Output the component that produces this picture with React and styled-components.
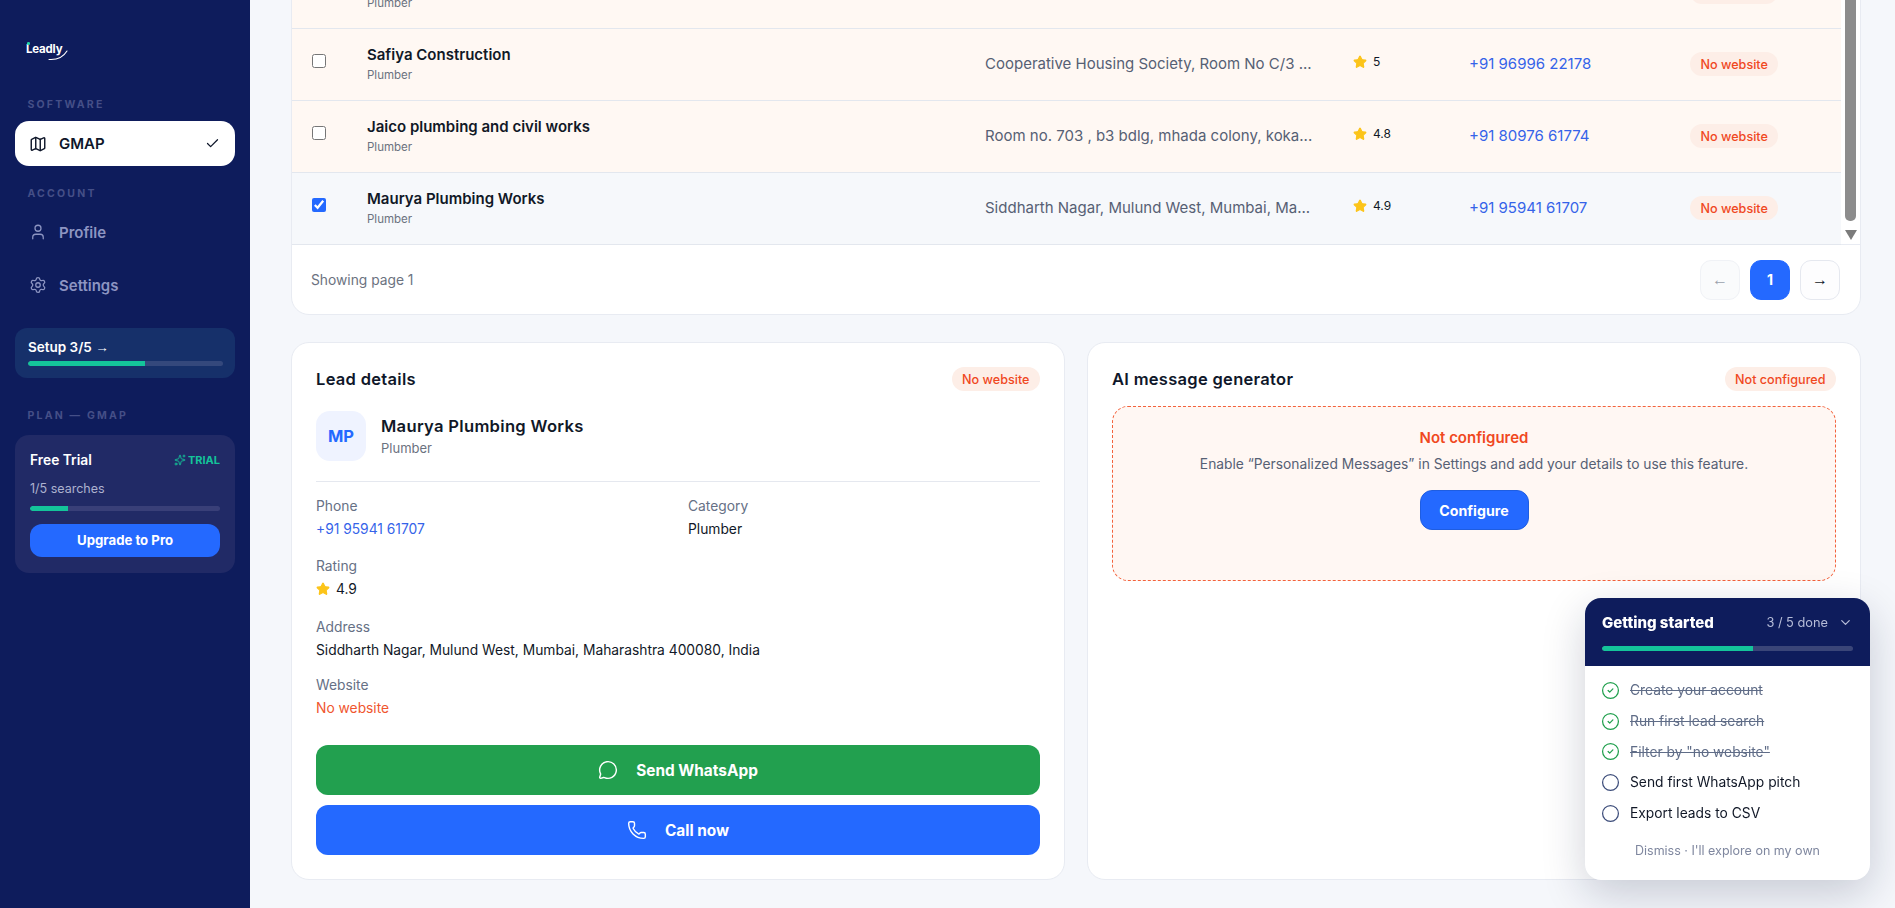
import React from "react";
import styled, { createGlobalStyle } from "styled-components";
import { Map as MapIcon, User, Settings, Check, Star, Sparkles, MessageCircle, Phone, ChevronDown, CircleCheck, Circle } from "lucide-react";

const Global = createGlobalStyle`
  html, body { margin: 0; padding: 0; height: 100%; overflow: hidden; background: #f5f7fb; }
  body { font-family: Inter, "Liberation Sans", sans-serif; color: #111827; }
  * { box-sizing: border-box; }
`;

const Shell = styled.div`
  display: flex;
  width: 100%;
  height: 100vh;
  overflow: hidden;
`;

const Sidebar = styled.aside`
  flex: 0 0 250px;
  height: 100%;
  background: #0e1c5c;
  display: flex;
  flex-direction: column;
  padding: 40px 15px 0;
`;

const LogoWrap = styled.div`
  position: relative;
  height: 18px;
  margin-left: 11px;
  display: flex;
  align-items: center;
`;

const LogoText = styled.span`
  font-size: 11.5px;
  font-weight: 700;
  color: #fff;
  letter-spacing: -0.2px;
  line-height: 14px;
`;

const LogoDot = styled.span`
  position: absolute;
  left: 1px;
  top: 2px;
  width: 2.5px;
  height: 2.5px;
  border-radius: 50%;
  background: #1fd3a5;
`;

const LogoSwoosh = styled.svg`
  position: absolute;
  left: 22px;
  top: 9px;
`;

const SectionLabel = styled.div`
  margin-top: ${(p) => p.$top}px;
  padding-left: 12.5px;
  font-size: 10.5px;
  line-height: 12px;
  font-weight: 700;
  letter-spacing: 2.2px;
  color: #454f87;
  white-space: nowrap;
`;

const NavItem = styled.div`
  height: 45px;
  margin-top: ${(p) => p.$top}px;
  padding: 0 15px 0 14px;
  display: flex;
  align-items: center;
  gap: 12px;
  border-radius: 14px;
  background: ${(p) => (p.$active ? "#fff" : "transparent")};
  color: ${(p) => (p.$active ? "#0f172a" : "#8d95c2")};
  font-size: 15px;
  font-weight: 600;
`;

const NavLabel = styled.span`
  flex: 1;
`;

const SetupCard = styled.div`
  height: 50px;
  margin-top: 20px;
  padding: 11px 12px 0 13px;
  border-radius: 12px;
  background: #16306a;
`;

const SetupText = styled.div`
  font-size: 13.5px;
  line-height: 16px;
  font-weight: 600;
  color: #fff;
`;

const Arrow = styled.span`
  font-family: "Liberation Sans", Arial, sans-serif;
  font-weight: 400;
`;

const Bar = styled.div`
  height: 5px;
  border-radius: 3px;
  overflow: hidden;
  background: ${(p) => p.$track};
  margin-top: ${(p) => p.$top}px;
`;

const BarFill = styled.div`
  height: 100%;
  background: #14c49a;
  border-radius: 3px 0 0 3px;
`;

const PlanCard = styled.div`
  height: 138px;
  margin-top: 13px;
  padding: 16px 15px 0;
  border-radius: 14px;
  background: #212a66;
`;

const PlanHead = styled.div`
  display: flex;
  justify-content: space-between;
  align-items: center;
  height: 18px;
`;

const PlanName = styled.span`
  font-size: 13.8px;
  font-weight: 600;
  color: #fff;
`;

const TrialTag = styled.span`
  display: inline-flex;
  align-items: center;
  gap: 2px;
  font-size: 11px;
  font-weight: 700;
  color: #14c49a;
`;

const PlanUsage = styled.div`
  margin-top: 13px;
  font-size: 12.5px;
  line-height: 14px;
  color: #adb2cf;
`;

const UpgradeButton = styled.button`
  width: 100%;
  height: 33px;
  margin-top: 13px;
  border: 0;
  border-radius: 12px;
  background: #2469ff;
  color: #fff;
  font-family: Inter, sans-serif;
  font-size: 13.2px;
  font-weight: 700;
`;

const Main = styled.main`
  flex: 1;
  min-width: 0;
  height: 100%;
  overflow: hidden;
  display: flex;
  flex-direction: column;
  justify-content: flex-end;
  padding: 0 34px 28px 41px;
  gap: 27px;
`;

const Card = styled.section`
  flex: none;
  background: #fff;
  border: 1px solid #e8ebf2;
  border-radius: 18px;
  overflow: hidden;
`;

const TableArea = styled.div`
  display: flex;
`;

const Rows = styled.div`
  flex: 1;
  min-width: 0;
`;

const Row = styled.div`
  height: 72px;
  padding-left: 20px;
  display: grid;
  grid-template-columns: 55px 618px 368px 116px 221px 1fr;
  align-items: center;
  background: ${(p) => (p.$selected ? "#f6f8fb" : "#fff8f3")};
  border-bottom: 1px solid #e3e7ee;
`;

const CheckCell = styled.div`
  display: flex;
  padding-bottom: 8px;
`;

const RowCheck = styled.input.attrs({ type: "checkbox", readOnly: true })`
  width: 14px;
  height: 14px;
  margin: 0;
  accent-color: #2469ff;
`;

const LeadBlock = styled.div`
  padding-bottom: 2px;
`;

const LeadName = styled.div`
  font-size: 15px;
  line-height: 18px;
  font-weight: 600;
  color: #111827;
`;

const LeadCategory = styled.div`
  margin-top: 4px;
  font-size: 11.5px;
  line-height: 14px;
  color: #6b7280;
`;

const AddressCell = styled.div`
  padding-bottom: 2px;
  font-size: 15px;
  line-height: 18px;
  color: #566074;
  white-space: nowrap;
`;

const RatingCell = styled.div`
  display: flex;
  align-items: center;
  gap: 6px;
  padding-bottom: 6px;
  font-size: 12px;
  color: #111827;
`;

const PhoneCell = styled.div`
  padding-bottom: 2px;
  line-height: 18px;
`;

const PhoneLink = styled.span`
  font-size: ${(p) => p.$size}px;
  color: #3563e9;
`;

const Badge = styled.span`
  display: inline-flex;
  align-items: center;
  height: 24px;
  padding: 0 10.5px;
  border-radius: 12px;
  background: #fdeee7;
  color: #f0481e;
  font-size: 12.6px;
  font-weight: 500;
  white-space: nowrap;
`;

const BadgeCell = styled.div`
  justify-self: start;
  display: flex;
  padding-bottom: 1px;
`;

const ScrollRail = styled.div`
  flex: 0 0 19px;
  display: flex;
  flex-direction: column;
  align-items: flex-start;
  padding: 0 0 5px 4px;
`;

const ScrollThumb = styled.div`
  flex: 1;
  width: 11px;
  background: #8c8c8c;
  border-radius: 0 0 5px 5px;
`;

const ScrollArrow = styled.div`
  margin-top: 9px;
  width: 0;
  height: 0;
  border-left: 6px solid transparent;
  border-right: 6px solid transparent;
  border-top: 10px solid #7b7b7b;
`;

const TableFooter = styled.div`
  height: 70px;
  padding: 0 20px 0 19px;
  display: flex;
  align-items: center;
  justify-content: space-between;
  border-top: 1px solid #e8ebf2;
  margin-top: -1px;
`;

const PageInfo = styled.span`
  font-size: 13.8px;
  color: #6b7280;
`;

const Pager = styled.div`
  display: flex;
  gap: 10px;
`;

const PageButton = styled.button`
  width: 40px;
  height: 40px;
  border-radius: 11px;
  border: 1px solid ${(p) => (p.$current ? "#2469ff" : p.$disabled ? "#f0f2f6" : "#e5e8ef")};
  background: ${(p) => (p.$current ? "#2469ff" : p.$disabled ? "#fafbfc" : "#fdfdfe")};
  color: ${(p) => (p.$current ? "#fff" : p.$disabled ? "#9aa1ad" : "#111827")};
  font-family: ${(p) => (p.$current ? "Inter, sans-serif" : '"Liberation Sans", Arial, sans-serif')};
  font-size: ${(p) => (p.$current ? 14 : 16)}px;
  font-weight: ${(p) => (p.$current ? 700 : 400)};
`;

const Lower = styled.div`
  flex: none;
  display: grid;
  grid-template-columns: 1fr 1fr;
  gap: 22px;
`;

const Panel = styled(Card)`
  height: 538px;
  padding: 24px;
`;

const PanelHead = styled.div`
  display: flex;
  justify-content: space-between;
  align-items: center;
  height: 24px;
`;

const PanelTitle = styled.h2`
  margin: 0;
  font-size: 16.5px;
  font-weight: 600;
  letter-spacing: 0.3px;
  color: #0f172a;
`;

const Identity = styled.div`
  display: flex;
  align-items: center;
  gap: 15px;
  margin-top: 20px;
  padding-bottom: 20px;
  border-bottom: 1px solid #e5e8ef;
`;

const Avatar = styled.div`
  width: 50px;
  height: 50px;
  display: flex;
  align-items: center;
  justify-content: center;
  border-radius: 14px;
  background: #eff3ff;
  color: #2469ff;
  font-size: 16.5px;
  font-weight: 700;
`;

const IdentityName = styled.div`
  font-size: 16.6px;
  line-height: 20px;
  font-weight: 600;
  letter-spacing: 0.3px;
  color: #111827;
`;

const IdentityCategory = styled.div`
  margin-top: 4px;
  font-size: 13px;
  line-height: 16px;
  color: #6b7280;
`;

const Fields = styled.div`
  display: grid;
  grid-template-columns: 352px 352px;
  column-gap: 20px;
  margin-top: 15px;
`;

const Field = styled.div`
  height: ${(p) => p.$h}px;
  grid-column: ${(p) => (p.$wide ? "1 / -1" : "auto")};
`;

const FieldLabel = styled.div`
  font-size: 13.8px;
  line-height: 18px;
  color: #667085;
`;

const FieldValue = styled.div`
  display: flex;
  align-items: center;
  gap: 6px;
  margin-top: 5px;
  font-size: 13.8px;
  line-height: 18px;
  color: ${(p) => p.$color || "#111827"};
`;

const ActionButton = styled.button`
  width: 100%;
  height: 50px;
  margin-top: ${(p) => p.$top}px;
  display: flex;
  align-items: center;
  justify-content: center;
  gap: 18px;
  border: 0;
  border-radius: 12px;
  background: ${(p) => p.$bg};
  color: #fff;
  font-family: Inter, sans-serif;
  font-size: 15.4px;
  font-weight: 700;
`;

const Notice = styled.div`
  height: 175px;
  margin-top: 15px;
  padding-top: 21px;
  display: flex;
  flex-direction: column;
  align-items: center;
  border: 1px dashed #f3623c;
  border-radius: 16px;
  background: #fff7f3;
`;

const NoticeTitle = styled.div`
  font-size: 15px;
  line-height: 20px;
  font-weight: 600;
  color: #f0481e;
`;

const NoticeText = styled.div`
  margin-top: 7px;
  font-size: 13.8px;
  line-height: 18px;
  color: #566074;
`;

const ConfigureButton = styled.button`
  width: 109px;
  height: 40px;
  margin-top: 17px;
  border: 1px solid #1f5de0;
  border-radius: 12px;
  background: #2469ff;
  color: #fff;
  font-family: Inter, sans-serif;
  font-size: 14.2px;
  font-weight: 700;
`;

const Widget = styled.aside`
  position: fixed;
  left: 1585px;
  top: 598px;
  width: 285px;
  height: 282px;
  border-radius: 16px;
  overflow: hidden;
  background: #fff;
  box-shadow: 0 14px 44px rgba(15, 23, 60, 0.2);
`;

const WidgetHead = styled.div`
  height: 68px;
  padding: 0 17px;
  background: #0e1c5c;
`;

const WidgetTop = styled.div`
  height: 48px;
  display: flex;
  align-items: center;
  justify-content: space-between;
`;

const WidgetTitle = styled.span`
  font-size: 15px;
  font-weight: 800;
  color: #fff;
`;

const WidgetMeta = styled.span`
  display: inline-flex;
  align-items: center;
  gap: 10px;
  font-size: 12.8px;
  color: #b6bcd8;
`;

const StepList = styled.ul`
  list-style: none;
  margin: 0;
  padding: 9px 0 0 15.5px;
`;

const Step = styled.li`
  height: 30.7px;
  display: flex;
  align-items: center;
  gap: 10.5px;
  font-size: 13.8px;
  color: ${(p) => (p.$done ? "#5f6c87" : "#111827")};
  text-decoration: ${(p) => (p.$done ? "line-through" : "none")};
`;

const Dismiss = styled.div`
  margin-top: 15px;
  text-align: center;
  font-size: 12.5px;
  line-height: 16px;
  color: #7f879f;
`;

const leads = [
  { name: "Shree Plumbing Services", address: "Near Station Road", rating: "4.7", phone: "+91 98200 11223" },
  { name: "Safiya Construction", address: "Cooperative Housing Society, Room No C/3 ...", rating: "5", phone: "+91 96996 22178" },
  { name: "Jaico plumbing and civil works", address: "Room no. 703 , b3 bdlg, mhada colony, koka...", rating: "4.8", phone: "+91 80976 61774" },
  { name: "Maurya Plumbing Works", address: "Siddharth Nagar, Mulund West, Mumbai, Ma...", rating: "4.9", phone: "+91 95941 61707", selected: true },
];

const steps = [
  { label: "Create your account", done: true },
  { label: "Run first lead search", done: true },
  { label: 'Filter by "no website"', done: true },
  { label: "Send first WhatsApp pitch" },
  { label: "Export leads to CSV" },
];

const Rating = ({ size = 14 }) => <Star size={size} color="#fcc419" fill="#fcc419" strokeWidth={2} strokeLinejoin="round" />;

export default function App() {
  return (
    <Shell>
      <Global />
      <Sidebar>
        <LogoWrap>
          <LogoDot />
          <LogoText>Leadly</LogoText>
          <LogoSwoosh width="24" height="12" viewBox="0 0 24 12" fill="none">
            <path d="M1 10.5C8 11 15 8.5 19 2" stroke="#fff" strokeWidth="1.1" strokeLinecap="round" />
          </LogoSwoosh>
        </LogoWrap>
        <SectionLabel $top={41}>SOFTWARE</SectionLabel>
        <NavItem $active $top={10}>
          <MapIcon size={18} strokeWidth={1.9} />
          <NavLabel>GMAP</NavLabel>
          <Check size={15} strokeWidth={2} />
        </NavItem>
        <SectionLabel $top={22}>ACCOUNT</SectionLabel>
        <NavItem $top={9.5}>
          <User size={18} strokeWidth={1.7} />
          <NavLabel>Profile</NavLabel>
        </NavItem>
        <NavItem $top={8}>
          <Settings size={18} strokeWidth={1.7} />
          <NavLabel>Settings</NavLabel>
        </NavItem>
        <SetupCard>
          <SetupText>
            Setup 3/5 <Arrow>→</Arrow>
          </SetupText>
          <Bar $track="#34487c" $top={5}>
            <BarFill style={{ width: "60%" }} />
          </Bar>
        </SetupCard>
        <SectionLabel $top={32}>PLAN — GMAP</SectionLabel>
        <PlanCard>
          <PlanHead>
            <PlanName>Free Trial</PlanName>
            <TrialTag>
              <Sparkles size={12} strokeWidth={1.8} />
              TRIAL
            </TrialTag>
          </PlanHead>
          <PlanUsage>1/5 searches</PlanUsage>
          <Bar $track="#393f78" $top={10}>
            <BarFill style={{ width: "20%" }} />
          </Bar>
          <UpgradeButton>Upgrade to Pro</UpgradeButton>
        </PlanCard>
      </Sidebar>

      <Main>
        <Card>
          <TableArea>
            <Rows>
              {leads.map((lead) => (
                <Row key={lead.name} $selected={lead.selected}>
                  <CheckCell>
                    <RowCheck checked={!!lead.selected} />
                  </CheckCell>
                  <LeadBlock>
                    <LeadName>{lead.name}</LeadName>
                    <LeadCategory>Plumber</LeadCategory>
                  </LeadBlock>
                  <AddressCell>{lead.address}</AddressCell>
                  <RatingCell>
                    <Rating />
                    {lead.rating}
                  </RatingCell>
                  <PhoneCell>
                    <PhoneLink $size={15}>{lead.phone}</PhoneLink>
                  </PhoneCell>
                  <BadgeCell>
                    <Badge>No website</Badge>
                  </BadgeCell>
                </Row>
              ))}
            </Rows>
            <ScrollRail>
              <ScrollThumb />
              <ScrollArrow />
            </ScrollRail>
          </TableArea>
          <TableFooter>
            <PageInfo>Showing page 1</PageInfo>
            <Pager>
              <PageButton $disabled>←</PageButton>
              <PageButton $current>1</PageButton>
              <PageButton>→</PageButton>
            </Pager>
          </TableFooter>
        </Card>

        <Lower>
          <Panel>
            <PanelHead>
              <PanelTitle>Lead details</PanelTitle>
              <Badge>No website</Badge>
            </PanelHead>
            <Identity>
              <Avatar>MP</Avatar>
              <div>
                <IdentityName>Maurya Plumbing Works</IdentityName>
                <IdentityCategory>Plumber</IdentityCategory>
              </div>
            </Identity>
            <Fields>
              <Field $h={60}>
                <FieldLabel>Phone</FieldLabel>
                <FieldValue>
                  <PhoneLink $size={13.8}>+91 95941 61707</PhoneLink>
                </FieldValue>
              </Field>
              <Field $h={60}>
                <FieldLabel>Category</FieldLabel>
                <FieldValue>Plumber</FieldValue>
              </Field>
              <Field $wide $h={61}>
                <FieldLabel>Rating</FieldLabel>
                <FieldValue>
                  <Rating />
                  4.9
                </FieldValue>
              </Field>
              <Field $wide $h={58}>
                <FieldLabel>Address</FieldLabel>
                <FieldValue>Siddharth Nagar, Mulund West, Mumbai, Maharashtra 400080, India</FieldValue>
              </Field>
              <Field $wide $h={69}>
                <FieldLabel>Website</FieldLabel>
                <FieldValue $color="#f0562f">No website</FieldValue>
              </Field>
            </Fields>
            <ActionButton $bg="#22a04f" $top={0}>
              <MessageCircle size={20} strokeWidth={1.7} />
              Send WhatsApp
            </ActionButton>
            <ActionButton $bg="#2469ff" $top={10}>
              <Phone size={20} strokeWidth={1.7} />
              Call now
            </ActionButton>
          </Panel>

          <Panel>
            <PanelHead>
              <PanelTitle>AI message generator</PanelTitle>
              <Badge>Not configured</Badge>
            </PanelHead>
            <Notice>
              <NoticeTitle>Not configured</NoticeTitle>
              <NoticeText>Enable “Personalized Messages” in Settings and add your details to use this feature.</NoticeText>
              <ConfigureButton>Configure</ConfigureButton>
            </Notice>
          </Panel>
        </Lower>
      </Main>

      <Widget>
        <WidgetHead>
          <WidgetTop>
            <WidgetTitle>Getting started</WidgetTitle>
            <WidgetMeta>
              3 / 5 done
              <ChevronDown size={15} strokeWidth={2} />
            </WidgetMeta>
          </WidgetTop>
          <Bar $track="#3a4578" $top={0}>
            <BarFill style={{ width: "60%" }} />
          </Bar>
        </WidgetHead>
        <StepList>
          {steps.map((s) => (
            <Step key={s.label} $done={s.done}>
              {s.done ? <CircleCheck size={19} color="#22a04f" strokeWidth={1.6} /> : <Circle size={19} color="#3f4f7c" strokeWidth={1.6} />}
              {s.label}
            </Step>
          ))}
        </StepList>
        <Dismiss>Dismiss · I'll explore on my own</Dismiss>
      </Widget>
    </Shell>
  );
}
